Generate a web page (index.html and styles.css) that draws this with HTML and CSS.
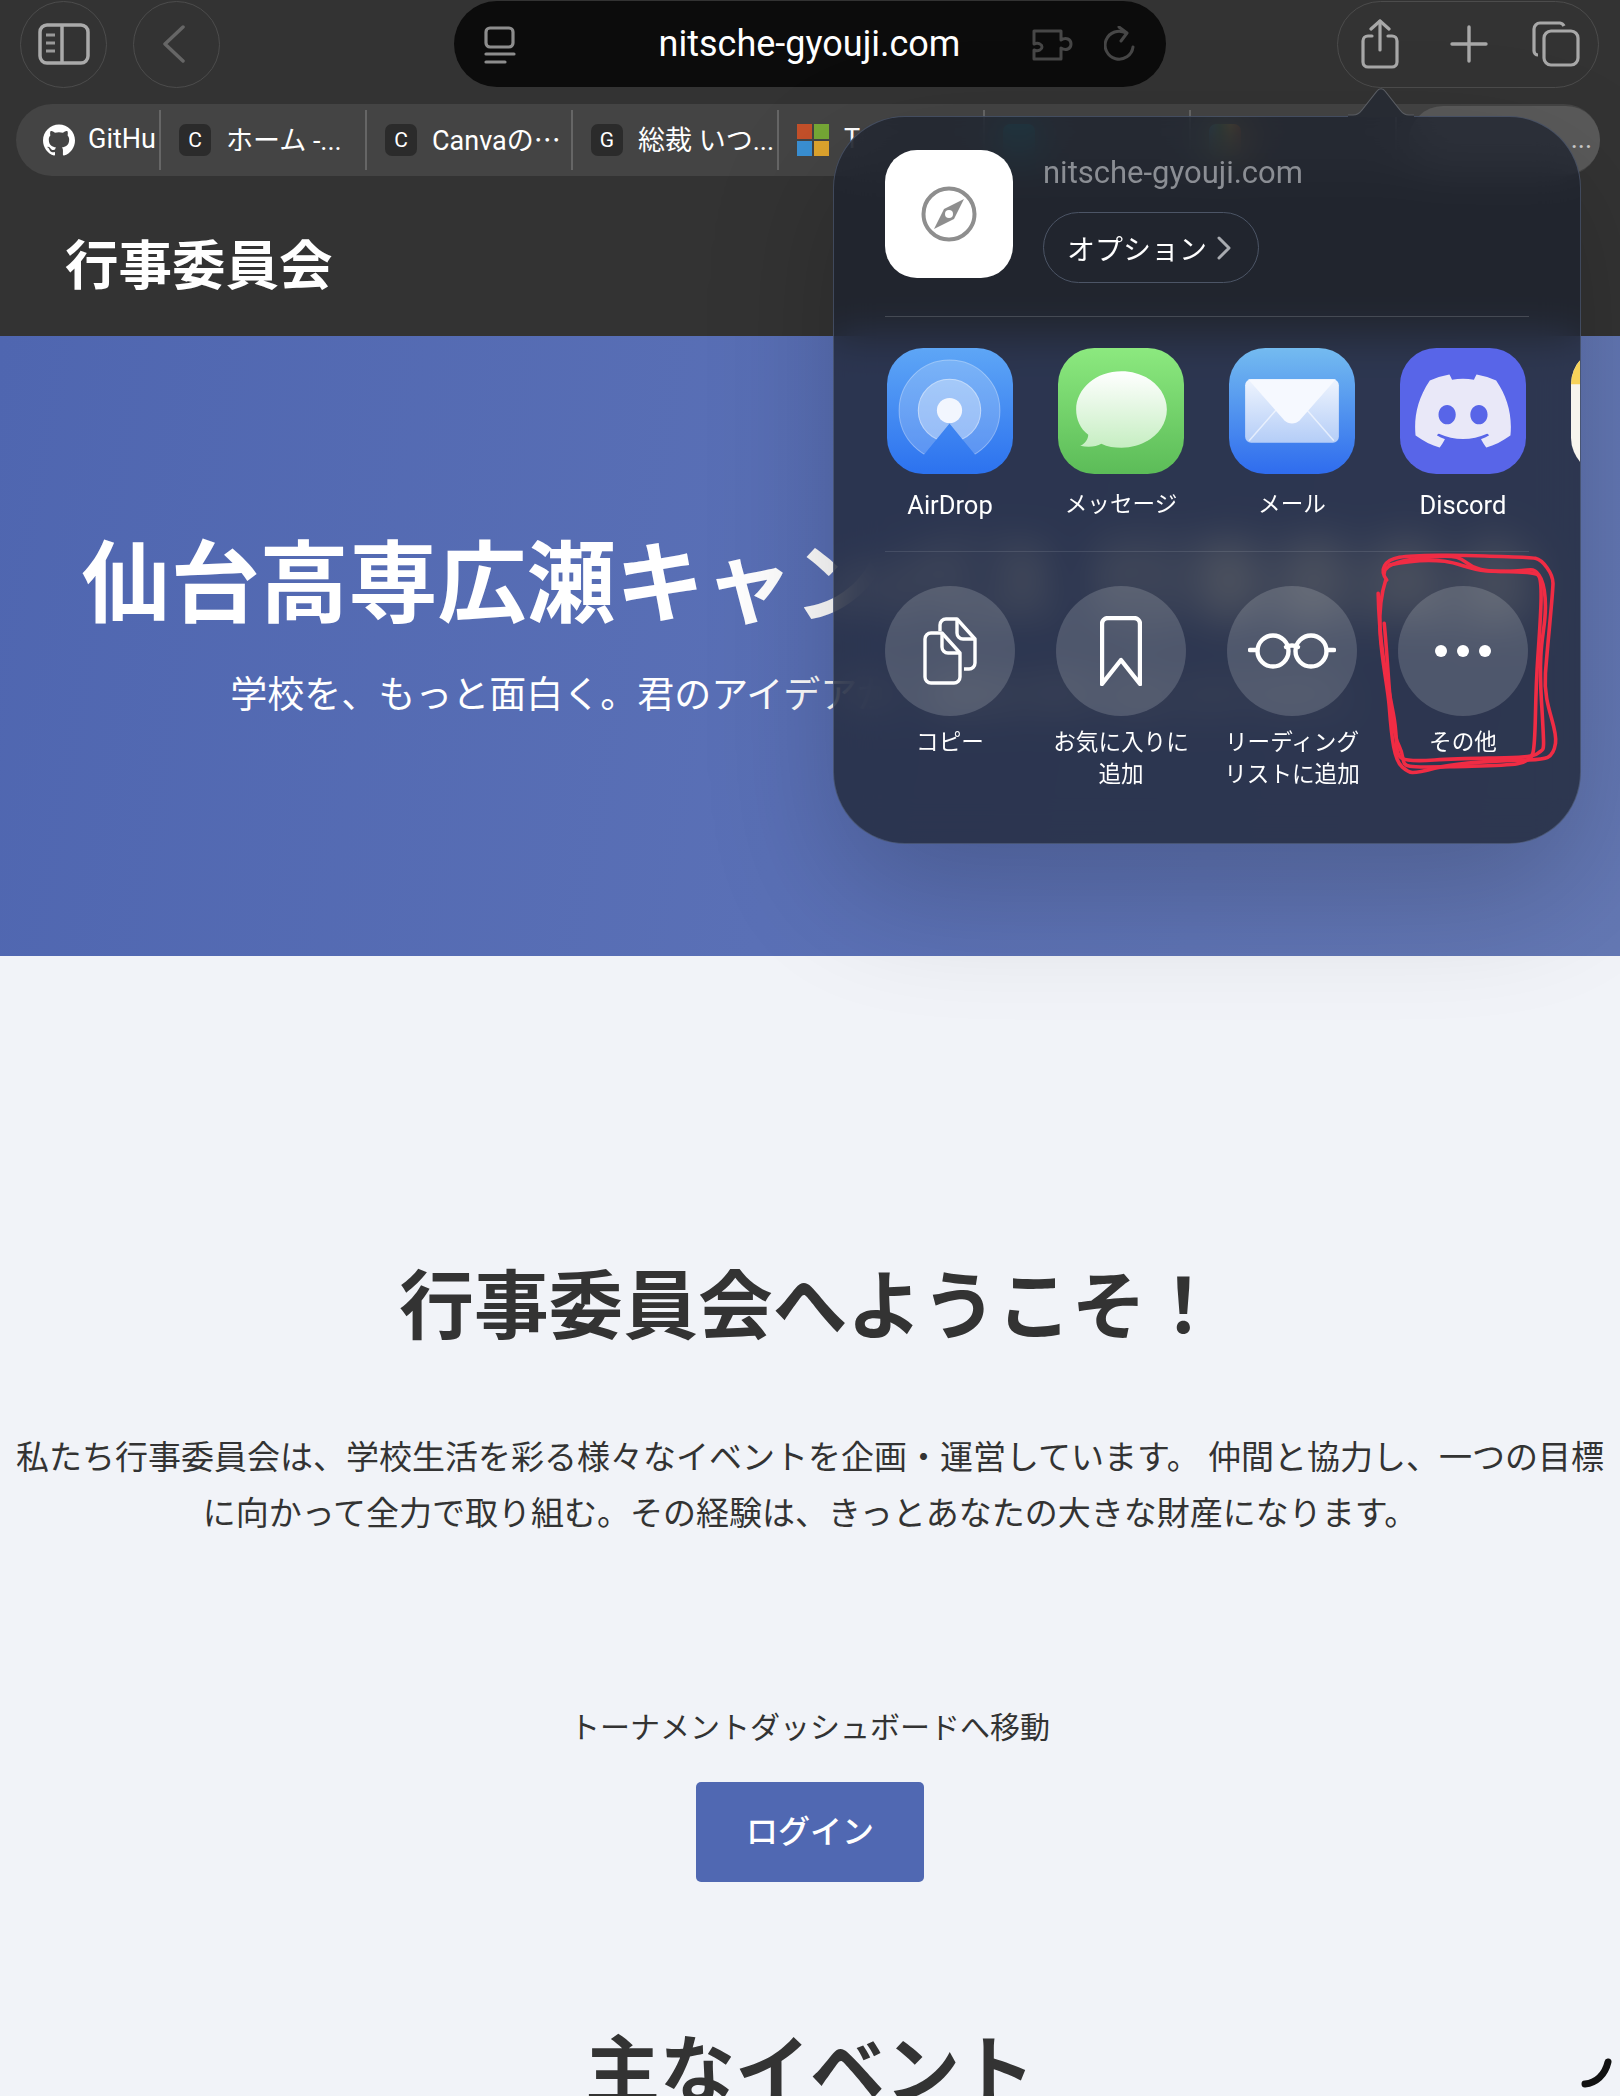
FILE: index.html
```html
<!DOCTYPE html>
<html lang="ja">
<head>
    <meta charset="UTF-8">
    <meta name="viewport" content="width=device-width, initial-scale=1.0">
    <title>行事委員会</title>
    <link rel="stylesheet" href="styles.css">
</head>
<body>
    <header class="site-header">
        <div class="toolbar">
            <div class="toolbar-left">
                <button class="round-btn">
                    <svg width="52" height="42" viewBox="0 0 52 42" fill="none" stroke="#aaa" stroke-width="3.5">
                        <rect x="2" y="2" width="48" height="38" rx="7"/>
                        <path d="M24 2v38"/>
                        <path d="M8 12h9M8 20h9M8 28h9" stroke-width="3" stroke="#999"/>
                    </svg>
                </button>
                <button class="round-btn back-btn">
                    <svg width="24" height="38" viewBox="0 0 24 38" fill="none" stroke="#666" stroke-width="3.5" stroke-linecap="round" stroke-linejoin="round">
                        <path d="M21 2L3 19l18 17"/>
                    </svg>
                </button>
            </div>
            <div class="address-bar">
                <svg class="reader-icon" width="32" height="38" viewBox="0 0 32 38" fill="none" stroke="#8d8d8d" stroke-width="3.2" stroke-linecap="round">
                    <rect x="2" y="2" width="27" height="19" rx="4"/>
                    <path d="M2 28h28"/>
                    <path d="M2 36h19"/>
                </svg>
                <span class="address-text">nitsche-gyouji.com</span>
                <div class="address-actions">
                    <svg width="42" height="34" viewBox="0 0 42 34" fill="none" stroke="#474747" stroke-width="3" stroke-linejoin="round">
                        <path d="M2 3h27v9c5-3 10-1 10 4s-5 7-10 4v11H2v-9c5 2 8-1 8-3s-3-5-8-3z"/>
                    </svg>
                    <svg width="32" height="38" viewBox="0 0 32 38" fill="none" stroke="#474747" stroke-width="3" stroke-linecap="round" stroke-linejoin="round">
                        <path d="M22 7A14 14 0 1 0 29 21"/>
                        <path d="M15 1l8 6-6 8"/>
                    </svg>
                </div>
            </div>
            <div class="toolbar-right">
                <svg width="38" height="50" viewBox="0 0 38 50" fill="none" stroke="#a8a8a8" stroke-width="3.2" stroke-linecap="round" stroke-linejoin="round">
                    <path d="M11 17H7a5 5 0 0 0-5 5v21a5 5 0 0 0 5 5h24a5 5 0 0 0 5-5V22a5 5 0 0 0-5-5h-4"/>
                    <path d="M19 31V2"/>
                    <path d="M10 10l9-8 9 8"/>
                </svg>
                <svg width="38" height="38" viewBox="0 0 38 38" fill="none" stroke="#a8a8a8" stroke-width="3.4" stroke-linecap="round">
                    <path d="M19 2v34M2 19h34"/>
                </svg>
                <svg width="48" height="46" viewBox="0 0 48 46" fill="none" stroke="#a8a8a8" stroke-width="3.2" stroke-linejoin="round">
                    <rect x="12" y="10" width="34" height="34" rx="7"/>
                    <path d="M6 34a4 4 0 0 1-4-4V8a6 6 0 0 1 6-6h20a5 5 0 0 1 4 3"/>
                </svg>
            </div>
        </div>

        <nav class="tab-bar">
            <div class="tab tab-first">
                <svg width="32" height="32" viewBox="0 0 24 24" fill="#fff">
                    <path d="M12 .297c-6.63 0-12 5.373-12 12 0 5.303 3.438 9.8 8.205 11.385.6.113.82-.258.82-.577 0-.285-.01-1.04-.015-2.04-3.338.724-4.042-1.61-4.042-1.61C4.422 18.07 3.633 17.7 3.633 17.7c-1.087-.744.084-.729.084-.729 1.205.084 1.838 1.236 1.838 1.236 1.07 1.835 2.809 1.305 3.495.998.108-.776.417-1.305.76-1.605-2.665-.3-5.466-1.332-5.466-5.93 0-1.31.465-2.38 1.235-3.22-.135-.303-.54-1.523.105-3.176 0 0 1.005-.322 3.3 1.23.96-.267 1.98-.399 3-.405 1.02.006 2.04.138 3 .405 2.28-1.552 3.285-1.23 3.285-1.23.645 1.653.24 2.873.12 3.176.765.84 1.23 1.91 1.23 3.22 0 4.61-2.805 5.625-5.475 5.92.42.36.81 1.096.81 2.22 0 1.606-.015 2.896-.015 3.286 0 .315.21.69.825.57C20.565 22.092 24 17.592 24 12.297c0-6.627-5.373-12-12-12"/>
                </svg>
                <span>GitHu</span>
            </div>
            <div class="tab"><i class="favicon">C</i><span>ホーム -...</span></div>
            <div class="tab"><i class="favicon">C</i><span>Canvaの⋯</span></div>
            <div class="tab"><i class="favicon">G</i><span>総裁 いつ...</span></div>
            <div class="tab">
                <svg width="32" height="32" viewBox="0 0 32 32">
                    <rect width="15" height="15" fill="#c4502a"/>
                    <rect x="17" width="15" height="15" fill="#76a836"/>
                    <rect y="17" width="15" height="15" fill="#3a90d4"/>
                    <rect x="17" y="17" width="15" height="15" fill="#e0a52e"/>
                </svg>
                <span>T</span>
            </div>
            <div class="tab"><i class="favicon favicon-teal"></i></div>
            <div class="tab"><i class="favicon favicon-rainbow"></i></div>
            <div class="tab tab-active"><span class="tab-dots">...</span></div>
        </nav>

        <div class="brand">行事委員会</div>
    </header>

    <section class="hero">
        <h1>仙台高専広瀬キャンパス 行事委員会</h1>
        <p>学校を、もっと面白く。君のアイデアが、最高の思い出になります。</p>
    </section>

    <main class="content">
        <section class="welcome">
            <h2>行事委員会へようこそ！</h2>
            <p>私たち行事委員会は、学校生活を彩る様々なイベントを企画・運営しています。 仲間と協力し、一つの目標に向かって全力で取り組む。その経験は、きっとあなたの大きな財産になります。</p>
        </section>
        <section class="dashboard">
            <p>トーナメントダッシュボードへ移動</p>
            <a class="login-btn">ログイン</a>
        </section>
        <h2 class="events-title">主なイベント</h2>
    </main>

    <!-- share sheet -->
    <aside class="share-sheet">
        <div class="sheet-head">
            <div class="site-icon">
                <svg width="56" height="56" viewBox="0 0 56 56">
                    <circle cx="28" cy="28" r="25.5" fill="none" stroke="#8e8e8e" stroke-width="4"/>
                    <path d="M43 13L33 33 13 43 23 23z" fill="#8e8e8e"/>
                    <circle cx="28" cy="28" r="4" fill="#fff"/>
                </svg>
            </div>
            <div class="sheet-site">
                <div class="sheet-domain">nitsche-gyouji.com</div>
                <div class="options-pill">オプション
                    <svg width="14" height="24" viewBox="0 0 14 24" fill="none" stroke="#a8abb0" stroke-width="3" stroke-linecap="round" stroke-linejoin="round">
                        <path d="M2 2l10 10L2 22"/>
                    </svg>
                </div>
            </div>
        </div>

        <div class="app-row">
            <div class="app">
                <svg class="app-icon" viewBox="0 0 125 125">
                    <defs>
                        <linearGradient id="airdropBg" x1="0" y1="0" x2="0" y2="1">
                            <stop offset="0" stop-color="#5ea6f6"/>
                            <stop offset="1" stop-color="#2c72ef"/>
                        </linearGradient>
                        <clipPath id="airdropWedge">
                            <path d="M0 0H125V125H103L62 75 21 125H0z"/>
                        </clipPath>
                    </defs>
                    <rect width="125" height="125" rx="36" fill="url(#airdropBg)"/>
                    <g clip-path="url(#airdropWedge)">
                        <circle cx="62" cy="62" r="50" fill="#fff" fill-opacity=".2" stroke="#fff" stroke-opacity=".35"/>
                        <circle cx="62" cy="62" r="31" fill="#fff" fill-opacity=".35" stroke="#fff" stroke-opacity=".5"/>
                    </g>
                    <circle cx="62" cy="62" r="12.5" fill="#f2f6fe"/>
                </svg>
                <span class="label-latin">AirDrop</span>
            </div>
            <div class="app">
                <svg class="app-icon" viewBox="0 0 125 125">
                    <defs>
                        <linearGradient id="msgBg" x1="0" y1="0" x2="0" y2="1">
                            <stop offset="0" stop-color="#8ce97f"/>
                            <stop offset="1" stop-color="#5cbc58"/>
                        </linearGradient>
                        <linearGradient id="msgBubble" x1="0" y1="0" x2="0" y2="1">
                            <stop offset="0" stop-color="#fff"/>
                            <stop offset="1" stop-color="#c6eec2"/>
                        </linearGradient>
                    </defs>
                    <rect width="125" height="125" rx="36" fill="url(#msgBg)"/>
                    <path d="M63 23c25 0 45 17 45 38S88 99 63 99c-7 0-14-1-20-4-5 3-13 4-21 2 5-2 8-7 8-11-8-6-12-15-12-25 0-21 20-38 45-38z" fill="url(#msgBubble)"/>
                </svg>
                <span>メッセージ</span>
            </div>
            <div class="app">
                <svg class="app-icon" viewBox="0 0 125 125">
                    <defs>
                        <linearGradient id="mailBg" x1="0" y1="0" x2="0" y2="1">
                            <stop offset="0" stop-color="#74bbf0"/>
                            <stop offset="1" stop-color="#2f6cee"/>
                        </linearGradient>
                        <linearGradient id="mailBody" x1="0" y1="0" x2="0" y2="1">
                            <stop offset="0" stop-color="#eef4fe"/>
                            <stop offset="1" stop-color="#b4cdf7"/>
                        </linearGradient>
                    </defs>
                    <rect width="125" height="125" rx="36" fill="url(#mailBg)"/>
                    <rect x="16" y="31" width="93" height="63" rx="6" fill="url(#mailBody)"/>
                    <path d="M20 92l42-48 42 48" fill="none" stroke="#fff" stroke-opacity=".6" stroke-width="1.5"/>
                    <path d="M19 31h87L70 72c-4 4-11 4-15 0z" fill="#f6f9ff"/>
                </svg>
                <span>メール</span>
            </div>
            <div class="app">
                <svg class="app-icon" viewBox="0 0 125 125">
                    <rect width="125" height="125" rx="36" fill="#5865e8"/>
                    <svg x="15" y="15" width="95" height="95" viewBox="0 0 24 24">
                        <path fill="#e9e8f8" d="M20.317 4.3698a19.7913 19.7913 0 00-4.8851-1.5152.0741.0741 0 00-.0785.0371c-.211.3753-.4447.8648-.6083 1.2495-1.8447-.2762-3.68-.2762-5.4868 0-.1636-.3933-.4058-.8742-.6177-1.2495a.077.077 0 00-.0785-.037 19.7363 19.7363 0 00-4.8852 1.515.0699.0699 0 00-.0321.0277C.5334 9.0458-.319 13.5799.0992 18.0578a.0824.0824 0 00.0312.0561c2.0528 1.5076 4.0413 2.4228 5.9929 3.0294a.0777.0777 0 00.0842-.0276c.4616-.6304.8731-1.2952 1.226-1.9942a.076.076 0 00-.0416-.1057c-.6528-.2476-1.2743-.5495-1.8722-.8923a.077.077 0 01-.0076-.1277c.1258-.0943.2517-.1923.3718-.2914a.0743.0743 0 01.0776-.0105c3.9278 1.7933 8.18 1.7933 12.0614 0a.0739.0739 0 01.0785.0095c.1202.099.246.1981.3728.2924a.077.077 0 01-.0066.1276 12.2986 12.2986 0 01-1.873.8914.0766.0766 0 00-.0407.1067c.3604.698.7719 1.3628 1.225 1.9932a.076.076 0 00.0842.0286c1.961-.6067 3.9495-1.5219 6.0023-3.0294a.077.077 0 00.0313-.0552c.5004-5.177-.8382-9.6739-3.5485-13.6604a.061.061 0 00-.0312-.0286zM8.02 15.3312c-1.1825 0-2.1569-1.0857-2.1569-2.419 0-1.3332.9555-2.4189 2.157-2.4189 1.2108 0 2.1757 1.0952 2.1568 2.419 0 1.3332-.9555 2.4189-2.1569 2.4189zm7.9748 0c-1.1825 0-2.1569-1.0857-2.1569-2.419 0-1.3332.9554-2.4189 2.1569-2.4189 1.2108 0 2.1757 1.0952 2.1568 2.419 0 1.3332-.946 2.4189-2.1568 2.4189Z"/>
                    </svg>
                </svg>
                <span class="label-latin">Discord</span>
            </div>
            <div class="app">
                <svg class="app-icon" viewBox="0 0 125 125">
                    <rect width="125" height="125" rx="36" fill="#f7f5ee"/>
                    <path d="M0 36a36 36 0 0 1 36-36h53a36 36 0 0 1 36 36z" fill="#f7d35a"/>
                </svg>
            </div>
        </div>

        <div class="action-row">
            <div class="action">
                <div class="action-circle">
                    <svg width="54" height="68" viewBox="0 0 54 68" fill="none" stroke="#fff" stroke-width="3.4" stroke-linejoin="round">
                        <path d="M17 14V8a6 6 0 0 1 6-6h11l18 20v24a6 6 0 0 1-6 6h-5"/>
                        <path d="M34 2v14a6 6 0 0 0 6 6h12"/>
                        <path d="M2 22a6 6 0 0 1 6-6h11l18 20v24a6 6 0 0 1-6 6H8a6 6 0 0 1-6-6z" fill="none"/>
                        <path d="M19 16v14a6 6 0 0 0 6 6h12"/>
                    </svg>
                </div>
                <span>コピー</span>
            </div>
            <div class="action">
                <div class="action-circle">
                    <svg width="42" height="70" viewBox="0 0 42 70" fill="none" stroke="#fff" stroke-width="4.4" stroke-linejoin="round">
                        <path d="M2 68V8a6 6 0 0 1 6-6h26a6 6 0 0 1 6 6v60L21 44z"/>
                    </svg>
                </div>
                <span>お気に入りに<br>追加</span>
            </div>
            <div class="action">
                <div class="action-circle">
                    <svg width="88" height="36" viewBox="0 0 88 36" fill="none" stroke="#fff" stroke-width="4.4" stroke-linecap="round">
                        <circle cx="25" cy="18" r="15.5"/>
                        <circle cx="63" cy="18" r="15.5"/>
                        <path d="M38 14c3-2 9-2 12 0"/>
                        <path d="M2 17h7M79 17h7"/>
                    </svg>
                </div>
                <span>リーディング<br>リストに追加</span>
            </div>
            <div class="action">
                <div class="action-circle">
                    <svg width="58" height="14" viewBox="0 0 58 14" fill="#fff">
                        <circle cx="7" cy="7" r="6"/>
                        <circle cx="29" cy="7" r="6"/>
                        <circle cx="51" cy="7" r="6"/>
                    </svg>
                </div>
                <span>その他</span>
            </div>
        </div>
    </aside>
    <svg class="sheet-arrow" width="66" height="30" viewBox="0 0 66 30">
        <path d="M0 28h5c4 0 6-1 9-5L29 4c2-3 6-3 8 0l15 19c3 4 5 5 9 5h5v2H0z" fill="#272b33"/>
        <path d="M0 28h5c4 0 6-1 9-5L29 4c2-3 6-3 8 0l15 19c3 4 5 5 9 5h5" fill="none" stroke="#5a5d63" stroke-width="1.2"/>
    </svg>

    <!-- hand-drawn mark around その他 -->
    <svg class="scribble" width="790" height="320" viewBox="0 0 1568 960" preserveAspectRatio="none" fill="none" stroke="#f02c44" stroke-width="3.6" stroke-linecap="round" stroke-linejoin="round">
        <path vector-effect="non-scaling-stroke" d="M1105 120C1090 90 1100 60 1130 52S1250 45 1300 48 1385 50 1400 55 1435 100 1435 130 1425 300 1420 400 1445 560 1440 610 1420 658 1380 660 1250 665 1200 685 1150 700 1135 680 1115 600 1110 500 1075 250 1103 120"/>
        <path vector-effect="non-scaling-stroke" d="M1100 100C1100 75 1130 58 1200 50S1250 72 1290 88 1385 86 1395 90 1420 120 1420 200 1405 300 1412 480 1418 620 1405 640 1300 650 1200 660 1135 650 1118 520 1090 300 1088 160"/>
        <path vector-effect="non-scaling-stroke" d="M1110 75C1150 62 1190 58 1220 64S1270 88 1300 92 1395 92 1405 105 1412 200 1405 350 1402 600 1395 640 1350 675 1230 680 1150 680 1130 620 1110 400 1100 250"/>
    </svg>

    <svg class="scroll-mark" width="34" height="32" viewBox="0 0 34 32" fill="none" stroke="#111" stroke-width="7" stroke-linecap="round">
        <path d="M5 27C16 26 25 18 28 5"/>
    </svg>
</body>
</html>
```

FILE: styles.css
```css
* {
    margin: 0;
    padding: 0;
    box-sizing: border-box;
}

html, body {
    height: 2096px;
    overflow: hidden;
}

body {
    position: relative;
    font-family: Roboto, "Noto Sans CJK JP", sans-serif;
    background-color: #f1f3f8;
    color: #333;
}

/* browser chrome + site header */
.site-header {
    height: 336px;
    background-color: #333;
    color: #fff;
}

.toolbar {
    display: grid;
    grid-template-columns: 1fr 712px 1fr;
    align-items: center;
    height: 88px;
    padding: 0 21px 0 20px;
}

.toolbar-left {
    display: flex;
    gap: 26px;
}

.round-btn {
    display: flex;
    align-items: center;
    justify-content: center;
    width: 87px;
    height: 87px;
    background: none;
    border: 1px solid #4c4c4c;
    border-radius: 50%;
}

.back-btn svg {
    margin-right: 5px;
}

.address-bar {
    display: flex;
    align-items: center;
    position: relative;
    height: 86px;
    padding: 0 30px;
    background-color: #0c0c0c;
    border-radius: 43px;
}

.address-text {
    flex: 1;
    text-align: center;
    font-size: 36px;
}

.reader-icon {
    position: absolute;
    left: 30px;
    top: 25px;
}

.address-actions {
    position: absolute;
    right: 30px;
    top: 25px;
    display: flex;
    align-items: center;
    gap: 30px;
}

.toolbar-right {
    justify-self: end;
    display: flex;
    align-items: center;
    justify-content: space-between;
    width: 262px;
    height: 87px;
    padding: 0 18px 0 23px;
    border: 1px solid #4c4c4c;
    border-radius: 44px;
}

.toolbar-right svg:nth-child(2) {
    margin-left: 6px;
}

.tab-bar {
    display: flex;
    align-items: center;
    height: 72px;
    margin: 16px 20px 0 16px;
    background-color: #444;
    border-radius: 36px;
}

.tab {
    display: flex;
    align-items: center;
    gap: 15px;
    width: 206px;
    height: 60px;
    padding-left: 18px;
    border-right: 2px solid #666;
    font-size: 27px;
    white-space: nowrap;
    overflow: hidden;
}

.tab span {
    margin-top: -3px;
}

.tab-first {
    width: 145px;
    padding-left: 27px;
    gap: 13px;
}

.tab-active {
    flex: 1;
    height: 68px;
    margin-left: 12px;
    padding-right: 8px;
    justify-content: flex-end;
    background-color: #5a5a5a;
    border: none;
    border-radius: 34px;
}

.tab-dots {
    color: #ccc;
}

.favicon {
    display: flex;
    align-items: center;
    justify-content: center;
    flex-shrink: 0;
    width: 32px;
    height: 32px;
    background-color: #2b2b2b;
    border-radius: 7px;
    font-style: normal;
    font-size: 21px;
}

.favicon-teal {
    background-color: #1c7f86;
}

.favicon-rainbow {
    background: linear-gradient(90deg, #3a90c8, #58a050, #e8b02f, #d2532a);
}

.brand {
    display: flex;
    align-items: center;
    height: 160px;
    padding: 11px 0 0 65px;
    font-size: 53.5px;
    font-weight: 700;
}

/* hero */
.hero {
    height: 620px;
    padding-top: 193px;
    background: linear-gradient(100deg, #4f66b0 0%, #5a70b6 50%, #6478b4 100%);
    color: #fff;
    text-align: center;
}

.hero h1 {
    font-size: 89px;
    font-weight: 700;
    line-height: 112px;
    word-spacing: 11px;
    white-space: nowrap;
}

.hero p {
    margin-top: 30px;
    padding-right: 19px;
    font-size: 37px;
    line-height: 50px;
    white-space: nowrap;
}

/* page content */
.content {
    text-align: center;
}

.welcome {
    padding-top: 303px;
}

.welcome h2 {
    font-size: 74.7px;
    font-weight: 700;
    line-height: 98px;
}

.welcome p {
    width: 1600px;
    margin: 73px auto 0;
    font-size: 33px;
    line-height: 56px;
}

.dashboard {
    margin-top: 166px;
}

.dashboard p {
    font-size: 30px;
    line-height: 40px;
}

.login-btn {
    display: block;
    width: 228px;
    height: 100px;
    margin: 34px auto 0;
    background-color: #5068b2;
    border-radius: 5px;
    color: #fff;
    font-size: 32px;
    font-weight: 500;
    line-height: 100px;
}

.events-title {
    margin-top: 141px;
    font-size: 75px;
    font-weight: 700;
    line-height: 98px;
}

/* share sheet overlay */
.share-sheet {
    position: absolute;
    left: 833px;
    top: 116px;
    width: 748px;
    height: 728px;
    padding: 33px 0 0 51px;
    overflow: hidden;
    background-color: rgba(27, 33, 44, 0.74);
    backdrop-filter: blur(20px);
    border: 1px solid rgba(140, 160, 200, 0.3);
    border-radius: 72px;
    box-shadow: 0 50px 130px rgba(0, 0, 0, 0.2);
    color: #fff;
}

.sheet-arrow {
    position: absolute;
    left: 1348px;
    top: 87px;
}

.sheet-head {
    display: flex;
    gap: 30px;
    width: 644px;
    height: 167px;
    border-bottom: 1px solid rgba(255, 255, 255, 0.16);
}

.site-icon {
    display: flex;
    align-items: center;
    justify-content: center;
    width: 128px;
    height: 128px;
    background-color: #fff;
    border-radius: 32px;
}

.sheet-domain {
    margin-top: 5px;
    font-size: 31px;
    line-height: 36px;
    color: #8b8e94;
}

.options-pill {
    display: flex;
    align-items: center;
    gap: 10px;
    width: 216px;
    height: 71px;
    margin-top: 21px;
    padding-left: 23px;
    border: 1px solid #4c5566;
    border-radius: 36px;
    font-size: 28px;
}

.app-row {
    display: flex;
    gap: 41px;
    width: 800px;
    height: 235px;
    padding-top: 31px;
    position: relative;
}

.app-row::after {
    content: "";
    position: absolute;
    left: 0;
    top: 234px;
    width: 644px;
    height: 1px;
    background-color: rgba(255, 255, 255, 0.1);
}

.app, .action {
    display: flex;
    flex-direction: column;
    align-items: center;
    flex-shrink: 0;
    width: 130px;
    font-size: 22.6px;
    line-height: 32px;
    text-align: center;
    white-space: nowrap;
}

.app-icon {
    width: 126px;
    height: 126px;
}

.app span {
    margin-top: 15px;
}

.app .label-latin {
    font-size: 25.5px;
}

.action-row {
    display: flex;
    gap: 41px;
    padding-top: 34px;
}

.action-circle {
    display: flex;
    align-items: center;
    justify-content: center;
    width: 130px;
    height: 130px;
    margin-bottom: 11px;
    background: rgba(255, 255, 255, 0.16);
    border-radius: 50%;
}

.scribble {
    position: absolute;
    left: 830px;
    top: 540px;
}

.scroll-mark {
    position: absolute;
    left: 1580px;
    top: 2057px;
}
```
